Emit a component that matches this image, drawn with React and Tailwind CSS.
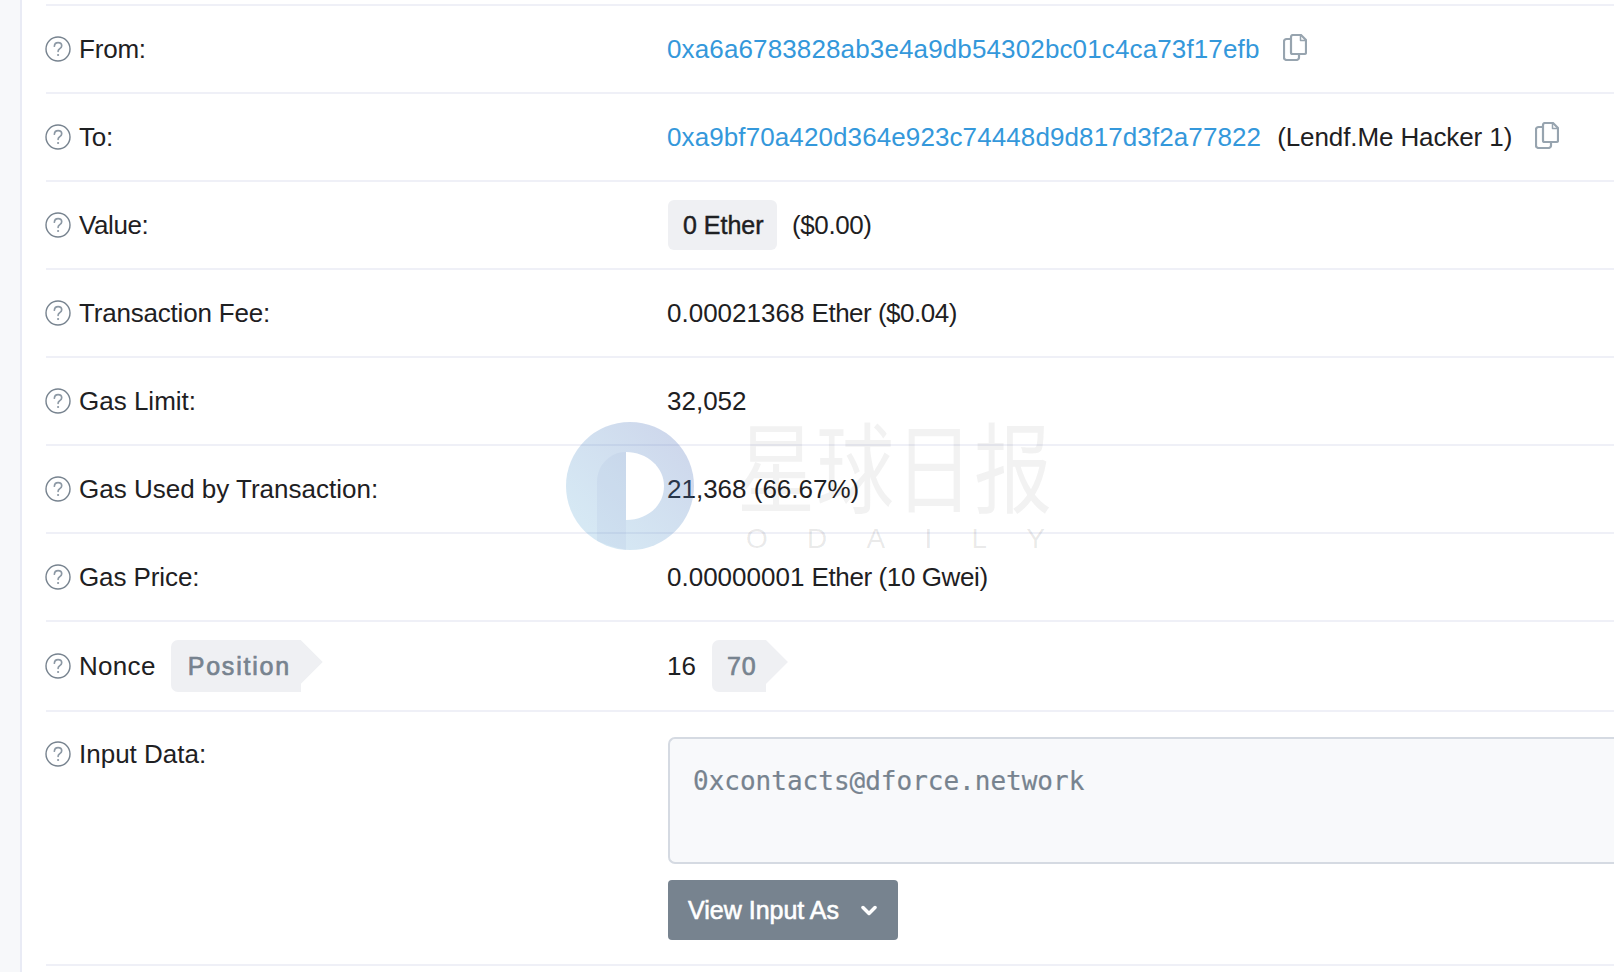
import React from 'react'

const sans = 'font-["Liberation_Sans",Arial,sans-serif]'

// ── Round question mark in front of every label ─────────────────────────────
const HelpIcon = () => (
  <svg width="26" height="26" viewBox="0 0 26 26" fill="none" className="shrink-0 -ml-[1px] mr-[8px]">
    <circle cx="13" cy="13" r="12" stroke="#77838f" strokeWidth="1.4" />
    <path d="M9.400 10.200c.1-2.100 1.600-3.500 3.700-3.500s3.600 1.300 3.600 3c0 1.300-.7 2.100-1.900 2.900-1.100.8-1.700 1.400-1.700 2.700" stroke="#8c98a4" strokeWidth="1.700" strokeLinecap="round" />
    <circle cx="13.100" cy="19" r="1.100" fill="#8c98a4" />
  </svg>
)

const CopyIcon = () => (
  <svg width="24" height="27" viewBox="0 0 24 27" fill="none" stroke="#97a4af" strokeWidth="2.200" strokeLinejoin="round" className="shrink-0">
    <path d="M7.500 5H3.500A2.500 2.500 0 0 0 1 7.500v16A2.500 2.500 0 0 0 3.500 26h10a2.500 2.500 0 0 0 2.500-2.500V20.500" />
    <path d="M10 1h8l5 5v12.500a1.500 1.500 0 0 1-1.500 1.500H9.500A1.500 1.500 0 0 1 8 18.500V3a2 2 0 0 1 2-2z" />
    <path d="M17.500 1v5.500H23" strokeWidth="1.500" />
  </svg>
)

// ── Grey tag with arrow on the right side ───────────────────────────────────
const ArrowTag = ({ children, className = '' }) => (
  <span className={`relative inline-flex items-center h-[52px] bg-[#eff0f3] rounded-l-[7px] text-[#77838f] text-[25px] [-webkit-text-stroke:0.7px_#77838f] ${className}`}>
    {children}
    <span className="absolute left-full top-0 w-[22px] h-[44px] bg-[#eff0f3] [clip-path:polygon(0_0,100%_50%,0_100%)]" />
  </span>
)

const Row = ({ label, labelClass = '', extra, children, height = 'h-[88px]' }) => (
  <div className={`flex items-center ${height} border-b-2 border-[#eff0f7]`}>
    <div className="w-[621px] shrink-0 flex items-center">
      <HelpIcon />
      <span className={labelClass}>{label}</span>
      {extra}
    </div>
    <div className="flex items-center min-w-0">{children}</div>
  </div>
)

const Watermark = () => (
  <div className="absolute left-[565px] top-[422px] w-[490px] h-[130px] pointer-events-none">
    <svg width="130" height="128" viewBox="0 0 130 128" className="absolute left-0 top-0">
      <defs>
        <linearGradient id="wm" x1="0" y1="1" x2="1" y2="0">
          <stop offset="0" stopColor="#3d9fd0" stopOpacity="0.2" />
          <stop offset="1" stopColor="#4a64b4" stopOpacity="0.28" />
        </linearGradient>
      </defs>
      <circle cx="65" cy="64" r="64" fill="url(#wm)" />
      <path d="M61 128V30C45 30 32 43 32 60V119Q46 125 61 128z" fill="#8a9acb" fillOpacity="0.1" />
      <path d="M61 30c21 0 38 15 38 34 0 20-17 34-38 34z" fill="#fff" />
    </svg>
    <div className='absolute left-[172px] top-0 flex whitespace-nowrap text-[78px] leading-[80px] tracking-[1px] scale-y-[1.25] text-[#232323]/[0.06] font-["Noto_Sans_CJK_SC",sans-serif]'>
      星球日报
    </div>
    <div className={`absolute left-[181px] top-[101px] w-[299px] flex justify-between text-[28px] leading-[32px] text-[#232323]/[0.1] ${sans}`}>
      <span>O</span><span>D</span><span>A</span><span>I</span><span>L</span><span>Y</span>
    </div>
  </div>
)

export default function App() {
  return (
    <div className={`relative h-[972px] overflow-hidden bg-[#f7f8fa] pl-[20px] text-[26px] leading-[32px] text-[#1e2022] ${sans}`}>
      <div className="h-full bg-white border-l-2 border-[#e9ebf5] pl-[24px] pt-[4px]">
        <div className="h-[2px] bg-[#eff0f7]" />

        <Row label="From:" labelClass="-tracking-[0.2px]">
          <a className="text-[#3498db] tracking-[0.13px]">0xa6a6783828ab3e4a9db54302bc01c4ca73f17efb</a>
          <span className="ml-[24px] -mt-[4px]"><CopyIcon /></span>
        </Row>

        <Row label="To:" labelClass="-tracking-[0.2px]">
          <a className="text-[#3498db] tracking-[0.1px]">0xa9bf70a420d364e923c74448d9d817d3f2a77822</a>
          <span className="ml-[16px] -tracking-[0.1px]">(Lendf.Me Hacker 1)</span>
          <span className="ml-[23px] -mt-[4px]"><CopyIcon /></span>
        </Row>

        <Row label="Value:" labelClass="-tracking-[0.4px]">
          <span className="flex items-center w-[109px] h-[50px] pl-[15px] ml-[1px] rounded-[6px] bg-[#eff0f3] text-[25px] whitespace-nowrap [-webkit-text-stroke:0.45px_#1e2022]">0 Ether</span>
          <span className="ml-[15px] -tracking-[0.4px]">($0.00)</span>
        </Row>

        <Row label="Transaction Fee:" labelClass="-tracking-[0.2px]">
          <span className="whitespace-pre">0.00021368 <span className="-tracking-[0.5px]">Ether ($0.04)</span></span>
        </Row>
        <Row label="Gas Limit:">32,052</Row>
        <Row label="Gas Used by Transaction:">21,368 (66.67%)</Row>
        <Row label="Gas Price:" labelClass="-tracking-[0.1px]">
          <span className="whitespace-pre">0.00000001 <span className="-tracking-[0.4px]">Ether (10 Gwei)</span></span>
        </Row>

        <Row
          label="Nonce"
          labelClass="tracking-[0.3px]"
          height="h-[90px]"
          extra={<ArrowTag className="ml-[15px] w-[130px] pl-[17px] tracking-[1.8px]">Position</ArrowTag>}
        >
          16
          <ArrowTag className="ml-[16px] w-[54px] pl-[15px] tracking-[1px]">70</ArrowTag>
        </Row>

        <div className="flex h-[254px] border-b-2 border-[#eff0f7]">
          <div className="w-[621px] shrink-0 self-start flex items-center mt-[26px]">
            <HelpIcon />
            <span>Input Data:</span>
          </div>
          <div className="flex-1 min-w-0 pt-[25px] pl-[1px]">
            <div className='h-[127px] pl-[23px] pt-[26px] bg-[#f8f9fb] border-2 border-r-0 border-[#d5dae2] rounded-l-[7px] text-[#77838f] font-["DejaVu_Sans_Mono",monospace] leading-[32px] [-webkit-text-stroke:0.2px_#77838f]'>
              0xcontacts@dforce.network
            </div>
            <button className="flex items-center mt-[16px] w-[230px] h-[60px] pl-[20px] bg-[#77838f] rounded-[4px] text-white text-[25px] whitespace-nowrap [-webkit-text-stroke:0.6px_#fff]">
              View Input As
              <svg width="16" height="11" viewBox="0 0 16 11" fill="none" stroke="#fff" strokeWidth="3.500" strokeLinecap="round" strokeLinejoin="round" className="ml-[22px]">
                <path d="M2 2.500l6 6 6-6" />
              </svg>
            </button>
          </div>
        </div>
      </div>
      <Watermark />
    </div>
  )
}
